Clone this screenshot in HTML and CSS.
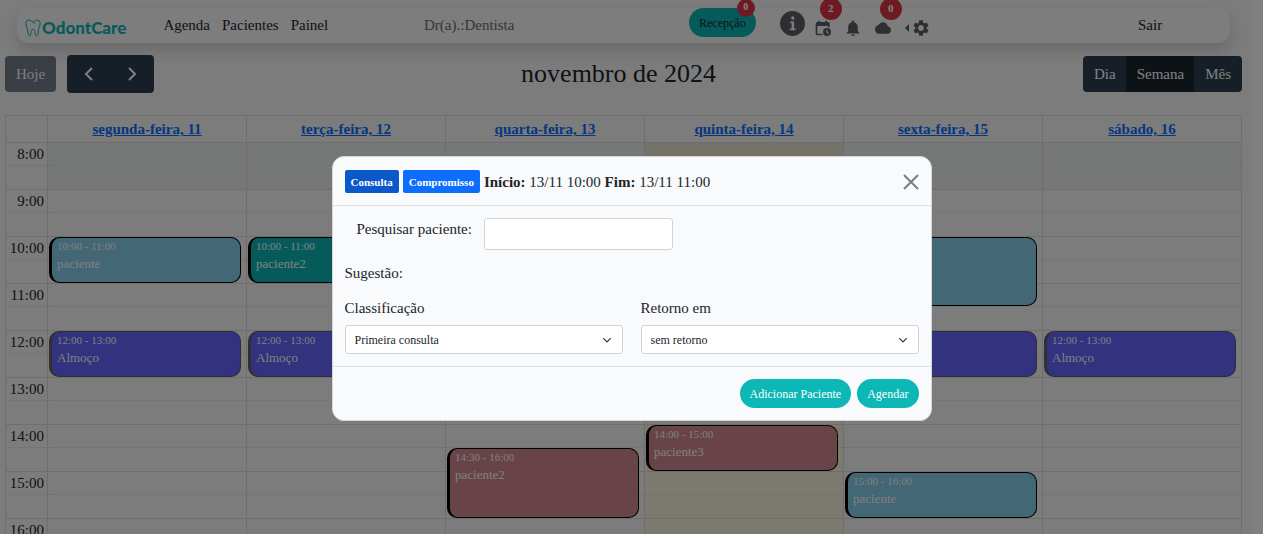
FILE: index.html
```html
<!DOCTYPE html>
<html lang="pt-BR">
<head>
<meta charset="utf-8">
<title>OdontCare</title>
<meta name="viewport" content="width=device-width, initial-scale=1">
<link rel="stylesheet" href="styles.css">
</head>
<body>
<div class="page">
  <header class="navbar">
    <nav class="nav-main">
      <a class="brand" href="#">
        <svg class="brand-tooth" viewBox="0 0 16 18" aria-hidden="true"><path d="M8 3.200C6.500 2 4.800.8 3.100 1.200 1 1.800.6 4 1 6c.3 1.500 1.300 2.600 1.500 4.200.3 2.300.1 5.200 1.600 6.500 1.400.6 1.500-1.600 1.800-3C6.200 12 6.600 10.300 8 10.300s1.800 1.700 2.100 3.400c.3 1.400.4 3.600 1.800 3 1.500-1.300 1.300-4.200 1.600-6.500.2-1.600 1.200-2.700 1.500-4.200.4-2 0-4.200-2.100-4.800C11.200.8 9.500 2 8 3.200l2 1.200"/></svg>
        <span>OdontCare</span>
      </a>
      <div class="nav-links">
        <a href="#">Agenda</a>
        <a href="#">Pacientes</a>
        <a href="#">Painel</a>
      </div>
    </nav>
    <span class="doctor">Dr(a).:Dentista</span>
    <div class="nav-tools">
      <button class="pill reception" type="button">Recepção<span class="badge badge-small">0</span></button>
      <button class="tool tool-info" type="button" aria-label="Informações">
        <svg viewBox="0 0 24 24"><path fill-rule="evenodd" d="M12 0a12 12 0 1 0 0 24 12 12 0 0 0 0-24zm.3 5a1.700 1.700 0 1 1 0 3.400 1.700 1.700 0 0 1 0-3.400zM9.800 10h3.700v6.800H15V18.500H9.500V16.800H11.200V11.700H9.800z"/></svg>
      </button>
      <button class="tool" type="button" aria-label="Agendamentos">
        <svg viewBox="0 0 24 24"><path fill-rule="evenodd" d="M5 1h2.500v2h8V1H18v2h1.500A2.500 2.500 0 0 1 22 5.500V11h-2.500V9H3.500v11.500H11V23H3.500A2.500 2.500 0 0 1 1 20.500v-15A2.500 2.500 0 0 1 3.500 3H5z"/><path fill-rule="evenodd" d="M18 12a6 6 0 1 0 0 12 6 6 0 0 0 0-12zm-.8 2.500h1.600v3.200l2.100 2.100-1.100 1.100-2.600-2.600z"/></svg>
        <span class="badge">2</span>
      </button>
      <button class="tool" type="button" aria-label="Notificações">
        <svg viewBox="2 2 20 20"><path d="M12 22c1.100 0 2-.9 2-2h-4c0 1.100.89 2 2 2zm6-6v-5c0-3.070-1.640-5.640-4.500-6.320V4c0-.83-.67-1.500-1.500-1.500s-1.500.67-1.500 1.500v.68C7.630 5.360 6 7.920 6 11v5l-2 2v1h16v-1l-2-2z"/></svg>
      </button>
      <button class="tool" type="button" aria-label="Nuvem">
        <svg viewBox="0 1 24 22" preserveAspectRatio="none"><path d="M19.350 10.040C18.670 6.590 15.640 4 12 4 9.110 4 6.600 5.640 5.350 8.040 2.340 8.360 0 10.910 0 14c0 3.310 2.690 6 6 6h13c2.760 0 5-2.240 5-5 0-2.640-2.050-4.780-4.650-4.960z"/></svg>
        <span class="badge">0</span>
      </button>
      <button class="tool tool-settings" type="button" aria-label="Configurações">
        <span class="caret"></span>
        <svg viewBox="2 2 20 20"><path d="M19.140 12.940c.04-.3.06-.61.06-.94 0-.32-.02-.64-.07-.94l2.030-1.580c.18-.14.23-.41.12-.61l-1.920-3.320c-.12-.22-.37-.29-.59-.22l-2.390.96c-.5-.38-1.030-.7-1.620-.94l-.36-2.540c-.04-.24-.24-.41-.48-.41h-3.840c-.24 0-.43.17-.47.41l-.36 2.540c-.59.24-1.130.57-1.620.94l-2.390-.96c-.22-.08-.47 0-.59.22L2.740 8.870c-.12.21-.08.47.12.61l2.030 1.580c-.05.3-.09.63-.09.94s.02.64.07.94l-2.030 1.580c-.18.14-.23.41-.12.61l1.920 3.320c.12.22.37.29.59.22l2.390-.96c.5.38 1.030.7 1.620.94l.36 2.540c.05.24.24.41.48.41h3.840c.24 0 .44-.17.47-.41l.36-2.540c.59-.24 1.130-.56 1.620-.94l2.390.96c.22.08.47 0 .59-.22l1.920-3.320c.12-.22.07-.47-.12-.61l-2.010-1.580zM12 15.600c-1.980 0-3.600-1.620-3.600-3.600s1.620-3.600 3.600-3.600 3.600 1.620 3.600 3.600-1.620 3.600-3.600 3.600z"/></svg>
      </button>
    </div>
    <a class="logout" href="#">Sair</a>
  </header>

  <main class="calendar">
    <div class="toolbar">
      <div class="toolbar-start">
        <button class="cal-btn today-btn" type="button" disabled>Hoje</button>
        <div class="btn-group">
          <button class="cal-btn step-btn" type="button" aria-label="Anterior"><svg viewBox="0 0 16 16"><path d="M11 2 5 8l6 6"/></svg></button>
          <button class="cal-btn step-btn" type="button" aria-label="Próximo"><svg viewBox="0 0 16 16"><path d="m5 2 6 6-6 6"/></svg></button>
        </div>
      </div>
      <h2 class="toolbar-title">novembro de 2024</h2>
      <div class="btn-group">
        <button class="cal-btn" type="button">Dia</button>
        <button class="cal-btn active" type="button">Semana</button>
        <button class="cal-btn" type="button">Mês</button>
      </div>
    </div>

    <div class="week">
      <table class="week-table">
        <colgroup><col class="axis-col"><col><col><col><col><col><col></colgroup>
        <thead>
          <tr><td></td>
            <th><a href="#">segunda-feira, 11</a></th><th><a href="#">terça-feira, 12</a></th><th><a href="#">quarta-feira, 13</a></th>
            <th><a href="#">quinta-feira, 14</a></th><th><a href="#">sexta-feira, 15</a></th><th><a href="#">sábado, 16</a></th></tr>
        </thead>
        <tbody>
          <tr class="hour closed"><th>8:00</th><td></td><td></td><td></td><td class="today"></td><td></td><td></td></tr>
          <tr class="half closed"><th></th><td></td><td></td><td></td><td class="today"></td><td></td><td></td></tr>
          <tr class="hour"><th>9:00</th><td></td><td></td><td></td><td class="today"></td><td></td><td></td></tr>
          <tr class="half"><th></th><td></td><td></td><td></td><td class="today"></td><td></td><td></td></tr>
          <tr class="hour"><th>10:00</th><td></td><td></td><td></td><td class="today"></td><td></td><td></td></tr>
          <tr class="half"><th></th><td></td><td></td><td></td><td class="today"></td><td></td><td></td></tr>
          <tr class="hour"><th>11:00</th><td></td><td></td><td></td><td class="today"></td><td></td><td></td></tr>
          <tr class="half"><th></th><td></td><td></td><td></td><td class="today"></td><td></td><td></td></tr>
          <tr class="hour"><th>12:00</th><td></td><td></td><td></td><td class="today"></td><td></td><td></td></tr>
          <tr class="half"><th></th><td></td><td></td><td></td><td class="today"></td><td></td><td></td></tr>
          <tr class="hour"><th>13:00</th><td></td><td></td><td></td><td class="today"></td><td></td><td></td></tr>
          <tr class="half"><th></th><td></td><td></td><td></td><td class="today"></td><td></td><td></td></tr>
          <tr class="hour"><th>14:00</th><td></td><td></td><td></td><td class="today"></td><td></td><td></td></tr>
          <tr class="half"><th></th><td></td><td></td><td></td><td class="today"></td><td></td><td></td></tr>
          <tr class="hour"><th>15:00</th><td></td><td></td><td></td><td class="today"></td><td></td><td></td></tr>
          <tr class="half"><th></th><td></td><td></td><td></td><td class="today"></td><td></td><td></td></tr>
          <tr class="hour"><th>16:00</th><td></td><td></td><td></td><td class="today"></td><td></td><td></td></tr>
          <tr class="half"><th></th><td></td><td></td><td></td><td class="today"></td><td></td><td></td></tr>
        </tbody>
      </table>
      <div class="events">
        <a href="#" class="event sky mon at-10 one-hour"><span class="event-time">10:00 - 11:00</span><span class="event-title">paciente</span></a>
        <a href="#" class="event lunch mon at-12 one-hour"><span class="event-time">12:00 - 13:00</span><span class="event-title">Almoço</span></a>
        <a href="#" class="event teal tue at-10 one-hour"><span class="event-time">10:00 - 11:00</span><span class="event-title">paciente2</span></a>
        <a href="#" class="event lunch tue at-12 one-hour"><span class="event-time">12:00 - 13:00</span><span class="event-title">Almoço</span></a>
        <a href="#" class="event rose wed at-1430 ninety"><span class="event-time">14:30 - 16:00</span><span class="event-title">paciente2</span></a>
        <a href="#" class="event rose thu at-14 one-hour"><span class="event-time">14:00 - 15:00</span><span class="event-title">paciente3</span></a>
        <a href="#" class="event sky fri at-10 ninety" aria-label="Consulta, 10:00 - 11:30"></a>
        <a href="#" class="event lunch fri at-12 one-hour" aria-label="Intervalo de sexta-feira"></a>
        <a href="#" class="event sky fri at-15 one-hour"><span class="event-time">15:00 - 16:00</span><span class="event-title">paciente</span></a>
        <a href="#" class="event lunch sat at-12 one-hour"><span class="event-time">12:00 - 13:00</span><span class="event-title">Almoço</span></a>
      </div>
    </div>
  </main>
</div>

<div class="backdrop">
  <form class="modal" role="dialog" aria-modal="true" aria-label="Agendar">
    <div class="modal-header">
      <button class="tag-btn selected" type="button">Consulta</button>
      <button class="tag-btn" type="button">Compromisso</button>
      <span><b>Início:</b> 13/11 10:00 <b>Fim:</b> 13/11 11:00</span>
      <button class="close" type="button" aria-label="Fechar"><svg viewBox="0 0 16 16"><path d="m1 1 14 14M15 1 1 15"/></svg></button>
    </div>
    <div class="modal-body">
      <div class="search-row">
        <label for="patient">Pesquisar paciente:</label>
        <input id="patient" type="text">
      </div>
      <div class="suggestion">Sugestão:</div>
      <div class="fields">
        <div class="field">
          <label for="kind">Classificação</label>
          <select id="kind"><option>Primeira consulta</option></select>
          <svg class="select-arrow" viewBox="0 0 16 16"><path d="m2 5 6 6 6-6"/></svg>
        </div>
        <div class="field">
          <label for="return">Retorno em</label>
          <select id="return"><option>sem retorno</option></select>
          <svg class="select-arrow" viewBox="0 0 16 16"><path d="m2 5 6 6 6-6"/></svg>
        </div>
      </div>
    </div>
    <div class="modal-footer">
      <button class="pill action" type="button">Adicionar Paciente</button>
      <button class="pill action" type="submit">Agendar</button>
    </div>
  </form>
</div>
</body>
</html>
```

FILE: styles.css
```css
* { box-sizing: border-box; }

body {
  margin: 0;
  height: 100vh;
  overflow: hidden;
  background: #fff;
  color: #212529;
  font-family: "Liberation Serif", "Times New Roman", serif;
  font-size: 15px;
  line-height: 22px;
}

button, input, select { font: inherit; color: inherit; margin: 0; }
button { border: 0; background: none; padding: 0; }
a { color: inherit; text-decoration: none; }

.page {
  height: 100vh;
  overflow: hidden;
  margin-right: 12px;
  padding: 8px 9px 0 5px;
  background: #f8f8f8;
}

/* Navigation */
.navbar {
  display: grid;
  grid-template-columns: 407fr 265fr 449fr 92fr;
  align-items: center;
  height: 35px;
  margin: 0 12px;
  padding-bottom: 2px;
  border-radius: 12px;
  background: #fafafa;
  box-shadow: 0 8px 16px rgba(0, 0, 0, .15);
}
.nav-main { display: flex; align-items: center; gap: 37px; padding-left: 8px; }
.brand {
  display: flex;
  align-items: center;
  gap: 1px;
  color: #0db7b5;
  font: 900 17px/20px Lato, sans-serif;
  padding-top: 6px;
}
.brand-tooth { width: 16px; height: 18px; fill: none; stroke: currentColor; stroke-width: 1; }
.nav-links { display: flex; gap: 12px; }
.doctor { color: #6b6e71; }
.nav-tools { display: flex; align-items: center; align-self: start; color: #5c5f66; }
.nav-tools svg { display: block; fill: currentColor; width: 16px; height: 16px; }

.pill {
  height: 29px;
  border-radius: 15px;
  background: #0db7b5;
  font-size: 12px;
  line-height: 20px;
  padding: 0 10px;
}
.reception { position: relative; color: #212529; margin-right: 24px; }
.tool { position: relative; margin: 10px 14px 0 0; }
.tool-info { margin: 2px 10px 0 0; }
.nav-tools .tool-info svg { width: 25px; height: 25px; }
.tool-settings { display: flex; align-items: center; gap: 4px; }
.caret { border: 4px solid transparent; border-right-color: currentColor; border-left: 0; }
.badge {
  position: absolute;
  left: 5px;
  top: -22px;
  width: 22px;
  height: 22px;
  border-radius: 50%;
  background: #dc3545;
  color: #fff;
  font: bold 11px/20px "Liberation Serif", serif;
  text-align: center;
}
.badge-small { left: auto; right: 1px; top: -9px; width: 18px; height: 18px; font-size: 10px; line-height: 16px; }

/* Calendar toolbar */
.calendar { padding-top: 12px; }
.toolbar { display: flex; justify-content: space-between; align-items: center; margin-bottom: 22px; }
.toolbar-start { display: flex; align-items: center; gap: 11px; }
.toolbar-title { margin: 0; font-size: 26px; line-height: 32px; font-weight: 400; }
.btn-group { display: flex; border-radius: 4px; overflow: hidden; }
.cal-btn { height: 36px; padding: 0 11px; background: #2c3e50; color: #fff; }
.cal-btn + .cal-btn { margin-left: -1px; }
.cal-btn.active { background: #1a252f; }
.today-btn { border-radius: 4px; opacity: .65; }
.step-btn { display: grid; place-items: center; width: 44px; height: 38px; }
.step-btn svg { width: 16px; height: 16px; fill: none; stroke: currentColor; stroke-width: 2; }

/* Week grid */
.week { position: relative; }
.week-table { width: 100%; table-layout: fixed; border-collapse: collapse; }
.axis-col { width: 42px; }
.week-table th, .week-table td { padding: 0; border: 1px solid #ddd; line-height: 20px; }
.week-table thead tr { height: 27px; }
.week-table thead a { color: #0d6efd; text-decoration: underline; }
.hour { height: 23px; }
.half { height: 24px; }
.week-table tbody th { font-weight: 400; text-align: right; padding-right: 3px; }
.week-table .hour > * { border-bottom-style: dotted; }
.week-table .half > * { border-top-style: dotted; }
.today { background: #f8f4dc; }
.closed td { background: #ebf0ee; }
.closed .today { background: #ebe7d2; }

.events {
  position: absolute;
  inset: 28px 0 auto 43px;
  display: grid;
  grid-template-columns: repeat(6, 1fr);
  grid-template-rows: repeat(9, 23px 24px);
}
.event {
  display: flex;
  flex-direction: column;
  margin: 0 6px 1px 1px;
  padding: 0 5px;
  border: 1px solid #000;
  border-left-width: 3px;
  border-radius: 10px;
  color: #fff;
}
.event-time { font-size: 11px; line-height: 17px; }
.event-title { font-size: 13px; line-height: 18px; }
.mon { grid-column: 1; }
.tue { grid-column: 2; }
.wed { grid-column: 3; }
.thu { grid-column: 4; }
.fri { grid-column: 5; }
.sat { grid-column: 6; }
.at-10 { grid-row-start: 5; }
.at-12 { grid-row-start: 9; }
.at-14 { grid-row-start: 13; }
.at-1430 { grid-row-start: 14; }
.at-15 { grid-row-start: 15; }
.one-hour { grid-row-end: span 2; }
.ninety { grid-row-end: span 3; }
.sky { background: #87ceeb; }
.teal { background: #0db7b5; }
.rose { background: #d08890; }
.lunch { background: #6464fc; border-color: #606060; }

/* Modal */
.backdrop {
  position: fixed;
  inset: 0;
  display: flex;
  justify-content: center;
  align-items: flex-start;
  padding-top: 156px;
  background: rgba(0, 0, 0, .5);
}
.modal {
  width: 600px;
  max-width: 100%;
  border: 1px solid #d5d7da;
  border-radius: 12px;
  background: #f8fafc;
}
.modal-header {
  display: flex;
  align-items: center;
  gap: 4px;
  padding: 13px 12px 12px;
  border-bottom: 1px solid #dee2e6;
}
.tag-btn {
  height: 23px;
  padding: 0 6px;
  border-radius: 2px;
  background: #0d6efd;
  color: #fff;
  font-size: 11px;
  font-weight: 700;
}
.tag-btn.selected { background: #0a58ca; }
.close { margin-left: auto; }
.close svg { display: block; width: 16px; height: 16px; fill: none; stroke: #7c7e80; stroke-width: 2; }

.modal-body { padding: 12px; }
.search-row { display: flex; align-items: flex-start; gap: 12px; padding-left: 12px; }
.search-row input {
  width: 189px;
  height: 32px;
  padding: 4px 8px;
  border: 1px solid #ced4da;
  border-radius: 3px;
  background: #fff;
}
.suggestion { margin: 12px 0 13px; }
.fields { display: grid; grid-template-columns: 1fr 1fr; gap: 18px; }
.field { position: relative; display: flex; flex-direction: column; gap: 6px; }
.field select {
  appearance: none;
  width: 100%;
  height: 29px;
  padding: 0 9px;
  border: 1px solid #ced4da;
  border-radius: 3px;
  background: #fff;
  font-size: 12px;
}
.select-arrow {
  position: absolute;
  right: 11px;
  bottom: 9px;
  width: 10px;
  height: 10px;
  fill: none;
  stroke: #343a40;
  stroke-width: 2;
  pointer-events: none;
}
.modal-footer {
  display: flex;
  justify-content: flex-end;
  gap: 6px;
  padding: 12px;
  border-top: 1px solid #dee2e6;
}
.action { color: #fff; }
```
